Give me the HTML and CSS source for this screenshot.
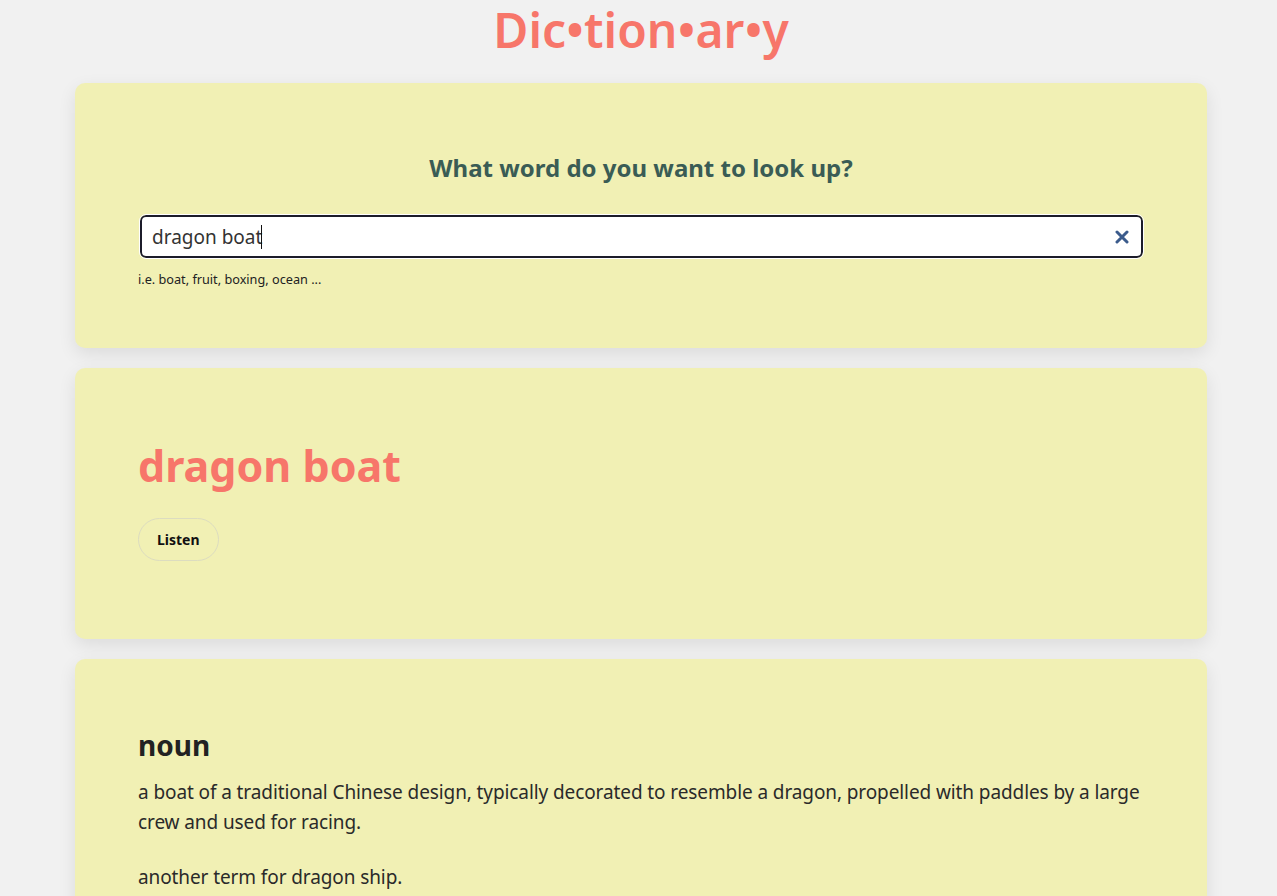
FILE: index.html
```html
<!DOCTYPE html>
<html lang="en">
<head>
<meta charset="utf-8">
<title>Dictionary</title>
<link rel="stylesheet" href="styles.css">
</head>
<body>
<div class="app">
  <h1 class="brand">Dic•tion•ar•y</h1>
  <section class="card search-card">
    <h2 class="search-title">What word do you want to look up?</h2>
    <form class="search-form">
      <div class="input-wrap">
        <input class="search-input" type="search" value="dragon boat">
        <span class="caret"></span>
        <button type="button" class="clear-btn" aria-label="Clear">
          <svg width="14" height="14" viewBox="0 0 14 14"><path d="M2 2L12 12M12 2L2 12" stroke="#3b5b8c" stroke-width="3" stroke-linecap="round"/></svg>
        </button>
      </div>
    </form>
    <p class="hint">i.e. boat, fruit, boxing, ocean ...</p>
  </section>
  <section class="card word-card">
    <h2 class="word">dragon boat</h2>
    <button type="button" class="listen-btn">Listen</button>
  </section>
  <section class="card meaning-card">
    <h3 class="pos">noun</h3>
    <p class="definition">a boat of a traditional Chinese design, typically decorated to resemble a dragon, propelled with paddles by a large crew and used for racing.</p>
    <p class="definition">another term for dragon ship.</p>
  </section>
</div>
</body>
</html>
```
FILE: styles.css
```css
* { box-sizing: border-box; }
html, body { margin: 0; padding: 0; }
body {
  background: #f1f1f1;
  font-family: "Noto Sans", "Open Sans", sans-serif;
  color: #222;
  overflow: hidden;
  padding-left: 5px;
}
.app {
  width: 1132px;
  margin: 0 auto;
  display: flex;
  flex-direction: column;
  gap: 20px;
}
.brand {
  margin: 0;
  height: 63px;
  padding-top: 1px;
  text-align: center;
  color: #f7766a;
  font-size: 48px;
  font-weight: 600;
  line-height: 58px;
}
.card {
  background: #f1f0b4;
  border-radius: 10px;
  box-shadow: 0 6px 18px rgba(0,0,0,0.09);
  padding: 0 63px;
}
.search-card { height: 265px; padding-top: 68px; }
.search-title {
  margin: 0 0 30px;
  text-align: center;
  font-size: 24px;
  font-weight: 700;
  color: #3a5c55;
  line-height: 34px;
}
.search-form { margin: 0; }
.input-wrap { position: relative; margin-left: 2px; margin-right: 1px; }
.search-input {
  display: block;
  width: 100%;
  height: 43px;
  border: 2px solid #1c1c2a;
  border-radius: 6px;
  background: #fff;
  font-family: inherit;
  font-size: 19px;
  color: #333;
  padding: 0 40px 0 10px;
  outline: 1px solid #fff;
  -webkit-appearance: none;
  appearance: none;
}
.search-input::-webkit-search-cancel-button { display: none; }
.caret {
  position: absolute;
  left: 121px;
  top: 10px;
  width: 1px;
  height: 24px;
  background: #111;
}
.clear-btn {
  position: absolute;
  right: 14px;
  top: 15px;
  border: 0;
  padding: 0;
  background: none;
  line-height: 0;
}
.hint {
  margin: 12px 0 0;
  font-size: 12.7px;
  color: #222;
}
.word-card { height: 271px; padding-top: 70px; }
.word {
  margin: 0;
  color: #f7766a;
  font-size: 43px;
  font-weight: 700;
  line-height: 56px;
}
.listen-btn {
  margin-top: 24px;
  height: 43px;
  padding: 0 18px;
  border: 1px solid #dcdcc0;
  border-radius: 22px;
  background: transparent;
  font-family: inherit;
  font-size: 14px;
  font-weight: 700;
  color: #111;
}
.meaning-card { padding-top: 68px; padding-bottom: 60px; }
.pos {
  margin: 0 0 14px;
  font-size: 28px;
  font-weight: 700;
  color: #222;
  line-height: 36px;
}
.definition {
  margin: 0 0 25px;
  font-size: 19px;
  letter-spacing: -0.1px;
  line-height: 30px;
  color: #2a2a2a;
}
```
